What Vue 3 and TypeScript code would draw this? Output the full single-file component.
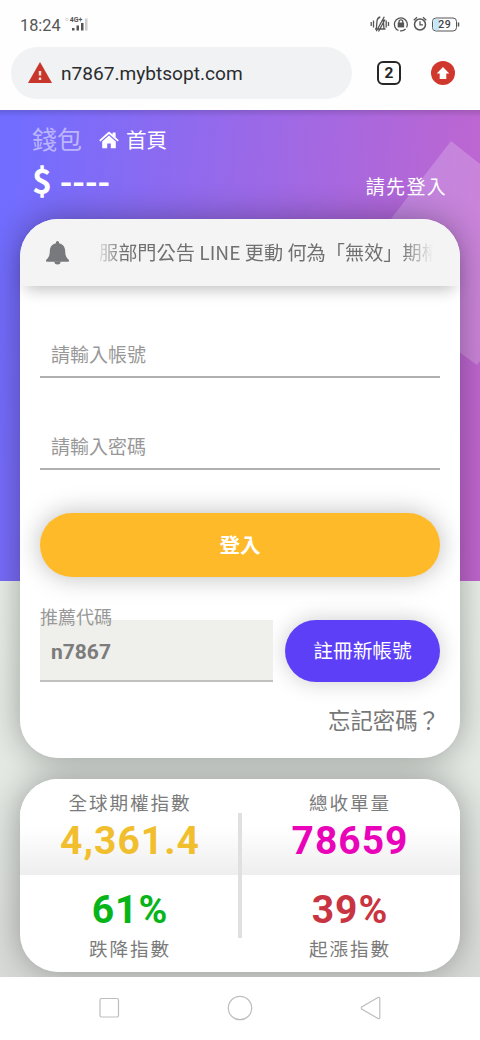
<script setup lang="ts">
import { ref } from 'vue'

interface Stat {
  label: string
  value: string
  tone: string
}

const account = ref('')
const password = ref('')
const referral = ref('n7867')
const upper: Stat[] = [
  { label: '全球期權指數', value: '4,361.4', tone: 'gold' },
  { label: '總收單量', value: '78659', tone: 'pink' },
]
const lower: Stat[] = [
  { label: '跌降指數', value: '61%', tone: 'green' },
  { label: '起漲指數', value: '39%', tone: 'red' },
]
</script>

<template>
  <div class="phone">
    <header class="chrome">
      <div class="status">
        <span class="clock">18:24</span>
        <svg class="signal" width="26" height="20" viewBox="0 0 26 20">
          <circle cx="2" cy="5.5" r="1.2" fill="none" stroke="#ccc" stroke-width=".8" />
          <text x="4.800" y="8.3" class="net">4G+</text>
          <g fill="#555">
            <rect x="7" y="14" width="2.5" height="2.500" />
            <rect x="11.500" y="11.500" width="2.500" height="5" />
            <rect x="16" y="9" width="2.500" height="7.500" />
          </g>
          <rect x="20" y="4.500" width="2.500" height="12" fill="#ccc" />
        </svg>
        <span class="grow"></span>
        <svg class="sys" width="91" height="20" viewBox="0 0 91 20" fill="none" stroke="#555" stroke-width="1.300">
          <path d="M1.200 8v4M3.500 6.500v7M16.200 6.500v7M18.500 8v4" />
          <path d="M5 15h10.500M6.300 14.800L7 7q.4-3.300 3.300-4M13.200 5.500L14 14.800M6.300 17.300L14.300 2.700M8.500 17.500L15 5.500" />
          <path d="M28.500 16.500A6.500 6.500 0 1 1 36.600 13.500M35.600 15A6.500 6.500 0 0 1 30 16.800" />
          <rect x="27.700" y="8.500" width="6.400" height="4.900" fill="#555" stroke="none" />
          <path d="M29 9V7.800a1.900 1.900 0 0 1 3.800 0V9" />
          <circle cx="50" cy="10.500" r="5.500" stroke-width="1.500" />
          <path d="M50 7.300v3.500h3M43.800 6.300l3.200-3M56.200 6.300l-3.200-3" />
          <rect x="62.500" y="4" width="24" height="13" rx="3.500" stroke-width="1" />
          <rect x="63.300" y="4.800" width="6.500" height="11.400" rx="2" fill="#c5e6f8" stroke="none" />
          <path d="M88.500 8.500v4" stroke-width="1.500" />
          <text x="74.800" y="14.300" text-anchor="middle" class="battery">29</text>
        </svg>
      </div>
      <div class="toolbar">
        <div class="address">
          <svg width="24" height="21" viewBox="0 0 24 21">
            <path d="M12 0L24 21H0z" fill="#c7352b" />
            <path d="M12 9v4.500M12 15.500v2.500" stroke="#f3e4e3" stroke-width="2.400" />
          </svg>
          <span>n7867.mybtsopt.com</span>
        </div>
        <div class="tabs">2</div>
        <svg class="update" width="24" height="24" viewBox="0 0 24 24">
          <circle cx="12" cy="12" r="12" fill="#d0382d" />
          <path d="M12 6l6.300 6.500h-3v5.500H8.700v-5.500h-3z" fill="#fff" />
        </svg>
      </div>
    </header>

    <main class="content">
      <svg class="shape" width="140" height="240" viewBox="0 0 140 240">
        <path d="M111 14L140 37V234L137 238L10 145z" fill="#fff" fill-opacity=".2" />
      </svg>
      <section class="wallet">
        <div class="wallet-top">
          <span class="wallet-title">錢包</span>
          <svg width="20" height="18" viewBox="0 0 20 18" fill="#fff">
            <path d="M.2 9.200L9 1.300q1-.9 2 0l2.600 2.300V1.500h3v4.800l3.200 2.900-1.200 1.400L10 2.900 1.400 10.600z" />
            <path d="M3.200 10.500L10 4.500l6.800 6V17.300h-5v-4.700H8.200v4.700h-5z" />
          </svg>
          <a class="home">首頁</a>
        </div>
        <div class="wallet-bottom">
          <strong class="money">$ ----</strong>
          <span class="hint">請先登入</span>
        </div>
      </section>

      <section class="card login">
        <div class="notice">
          <svg width="23" height="24" viewBox="0 0 22 24" preserveAspectRatio="none" fill="#77797c">
            <path d="M11 0a1.500 1.500 0 0 1 1.500 1.500v.7c3.700.8 5.600 3.700 5.800 7 .2 5.300.9 7.600 3.400 9.500.7.800.3 2.100-.7 2.100H1c-1 0-1.400-1.300-.7-2.100C2.800 16.800 3.500 14.500 3.700 9.200c.2-3.300 2.100-6.200 5.800-7v-.7A1.500 1.500 0 0 1 11 0z" />
            <path d="M8 20.500h6a3 3 0 0 1-6 0z" />
          </svg>
          <div class="ticker">服部門公告 LINE 更動 何為「無效」期權</div>
        </div>
        <form class="form" @submit.prevent>
          <input v-model="account" class="field" type="text" placeholder="請輸入帳號" />
          <input v-model="password" class="field second" type="password" placeholder="請輸入密碼" />
          <button class="submit">登入</button>
          <div class="join">
            <div class="referral">
              <label>推薦代碼</label>
              <input v-model="referral" disabled />
            </div>
            <button class="register" type="button">註冊新帳號</button>
          </div>
          <a class="forgot">忘記密碼？</a>
        </form>
      </section>

      <section class="card stats">
        <div class="row top">
          <div v-for="s in upper" :key="s.label" class="stat">
            <span class="label">{{ s.label }}</span>
            <strong :class="s.tone">{{ s.value }}</strong>
          </div>
        </div>
        <div class="row bottom">
          <div v-for="s in lower" :key="s.label" class="stat">
            <strong :class="s.tone">{{ s.value }}</strong>
            <span class="label">{{ s.label }}</span>
          </div>
        </div>
        <i class="divider"></i>
      </section>
    </main>

    <nav class="nav">
      <svg width="480" height="62" viewBox="0 0 480 62" fill="none" stroke="#bdbdbd" stroke-width="1.200">
        <rect x="100" y="21.500" width="18.500" height="18.500" rx="1.500" />
        <circle cx="240" cy="31" r="11.700" />
        <path d="M378 20.500L362 29.800q-1.500 1.200 0 2.400L378 41.500q1.800.7 1.800-1.200V21.700q0-1.900-1.800-1.200z" />
      </svg>
    </nav>
  </div>
</template>

<style>
body {
  margin: 0;
  background: #fff;
}
</style>

<style scoped>
.phone {
  width: 480px;
  height: 1040px;
  overflow: hidden;
  display: flex;
  flex-direction: column;
  background: #fefefe;
  font-family: "Noto Sans CJK TC", "Noto Sans", sans-serif;
}
.phone * {
  box-sizing: border-box;
}
.chrome {
  height: 110px;
  flex: none;
  font-family: Roboto, sans-serif;
}
.status {
  height: 47px;
  padding: 14px 19px 0 20px;
  display: flex;
  align-items: flex-start;
}
.clock {
  font-size: 16.3px;
  line-height: 23px;
  color: #555;
}
.signal {
  margin-left: 4px;
}
.net {
  font: 700 7px Roboto, sans-serif;
  fill: #555;
}
.battery {
  font: 500 10.5px Roboto, sans-serif;
  letter-spacing: 0.5px;
  fill: #444;
  stroke: none;
}
.grow {
  flex: 1;
}
.toolbar {
  display: flex;
  align-items: center;
  padding-left: 11px;
  height: 52px;
}
.address {
  width: 341px;
  height: 52px;
  border-radius: 26px;
  background: #f0f2f4;
  display: flex;
  align-items: center;
  padding-left: 17px;
  gap: 9px;
  font-size: 19.1px;
  color: #2b2c2e;
}
.address svg {
  margin-top: -2px;
}
.address span {
  padding-top: 1px;
}
.tabs {
  width: 24px;
  height: 24px;
  margin-left: 25px;
  border: 2.5px solid #252628;
  border-radius: 6px;
  font-size: 15.5px;
  font-weight: 700;
  line-height: 20px;
  text-align: center;
  color: #252628;
}
.update {
  margin-left: 29.500px;
}
.content {
  height: 867px;
  flex: none;
  position: relative;
  z-index: 0;
  overflow: hidden;
  background:
    linear-gradient(#0002, #0000 7px) 0 0 / 100% 7px no-repeat,
    linear-gradient(96deg, #726dff 3%, #9a69e8 48%, #c066cf 96%) 0 0 / 100% 471px no-repeat,
    linear-gradient(#eaf0ea 471px, #e3e8e3 680px, #d8dad7 867px);
}
.shape {
  position: absolute;
  right: 0;
  top: 17px;
  z-index: -1;
}
.wallet {
  height: 109px;
  padding: 10px 33px 0 32px;
  color: #fff;
}
.wallet-top {
  display: flex;
  align-items: center;
  height: 36px;
}
.wallet-title {
  font-size: 25px;
  line-height: 36px;
  color: #ffffff80;
}
.wallet-top svg {
  margin: 3px 7px 0 17px;
}
.home {
  font-size: 20.5px;
  line-height: 30px;
  padding-top: 2px;
}
.wallet-bottom {
  display: flex;
  justify-content: space-between;
  height: 50px;
}
.money {
  font-size: 34px;
  line-height: 48px;
}
.hint {
  font-size: 19px;
  letter-spacing: 1.3px;
  line-height: 28px;
  padding-top: 16px;
}
.card {
  position: relative;
  width: 440px;
  margin: 0 auto;
  border-radius: 38px;
  background: #fff;
}
.card::before {
  content: "";
  position: absolute;
  inset: 0;
  z-index: -1;
  border-radius: 38px;
  box-shadow: 0 0 34px #0005;
}
.login {
  height: 539px;
}
.notice {
  position: relative;
  z-index: 1;
  height: 67px;
  border-radius: 38px 38px 0 0;
  background: #f4f4f4;
  box-shadow: 0 9px 16px -6px #0004;
  display: flex;
  align-items: center;
  padding-left: 26px;
}
.ticker {
  margin: -2px 0 0 30px;
  width: 336px;
  overflow: hidden;
  white-space: nowrap;
  font-size: 19.200px;
  line-height: 28px;
  color: #707070;
  mask-image: linear-gradient(90deg, #0002, #000 24px, #000 302px, #0000 334px);
}
.form {
  display: flex;
  flex-direction: column;
  padding: 44px 20px 0;
}
.field {
  width: 400px;
  height: 48px;
  padding: 0 11px;
  border: 0;
  border-bottom: 2px solid #b0b0b0;
  background: transparent;
  font: 19px/28px "Noto Sans CJK TC", sans-serif;
  color: #777;
}
.field::placeholder {
  color: #989898;
  opacity: 1;
}
.second {
  margin-top: 44px;
}
.submit {
  margin-top: 43px;
  height: 64px;
  padding: 0 0 3px;
  border: 0;
  border-radius: 32px;
  background: #ffba29;
  box-shadow: 0 0 26px #0004;
  color: #fff;
  font: 700 20.5px "Noto Sans CJK TC", sans-serif;
}
.join {
  display: flex;
  justify-content: space-between;
  margin-top: 43px;
}
.referral {
  position: relative;
  width: 233px;
}
.referral label {
  position: absolute;
  left: 0;
  top: -17px;
  font-size: 18px;
  line-height: 26px;
  color: #989898;
}
.referral input {
  width: 233px;
  height: 62px;
  padding: 4px 11px 0;
  border: 0;
  border-bottom: 2px solid #c0c0be;
  background: #eff0eb;
  font: 700 21px Roboto, sans-serif;
  color: #7c7c7c;
}
.register {
  width: 155px;
  height: 62px;
  border: 0;
  border-radius: 31px;
  background: #5e3ff8;
  box-shadow: 0 0 22px #0003;
  color: #fff;
  padding: 0 0 4px;
  font: 19.7px "Noto Sans CJK TC", sans-serif;
}
.forgot {
  align-self: flex-end;
  margin-top: 21px;
  font-size: 22.4px;
  line-height: 32px;
  color: #777;
}
.stats {
  height: 193px;
  margin-top: 21px;
}
.row {
  display: flex;
}
.top {
  height: 96px;
  padding-top: 10px;
  border-radius: 38px 38px 0 0;
  background: linear-gradient(#fff 50%, #eee);
}
.bottom {
  height: 97px;
  padding-top: 12px;
}
.stat {
  width: 220px;
  display: flex;
  flex-direction: column;
  align-items: center;
}
.label {
  font-size: 18.6px;
  letter-spacing: 1.9px;
  line-height: 28px;
  color: #7b7b7b;
}
.stat strong {
  font: 700 39px/46px Roboto, sans-serif;
  letter-spacing: 1px;
}
.top strong {
  padding-top: 2px;
}
.top .label {
  margin-top: -1px;
}
.bottom .label {
  margin-top: 1px;
}
.gold {
  color: #f1bf2e;
}
.pink {
  color: #e904b9;
}
.green {
  color: #07b51b;
}
.red {
  color: #c93442;
}
.divider {
  position: absolute;
  left: 218px;
  top: 34px;
  width: 4px;
  height: 125px;
  background: #e0e0e1;
}
.nav {
  height: 63px;
  background: #fff;
}
.nav svg {
  display: block;
}
</style>
